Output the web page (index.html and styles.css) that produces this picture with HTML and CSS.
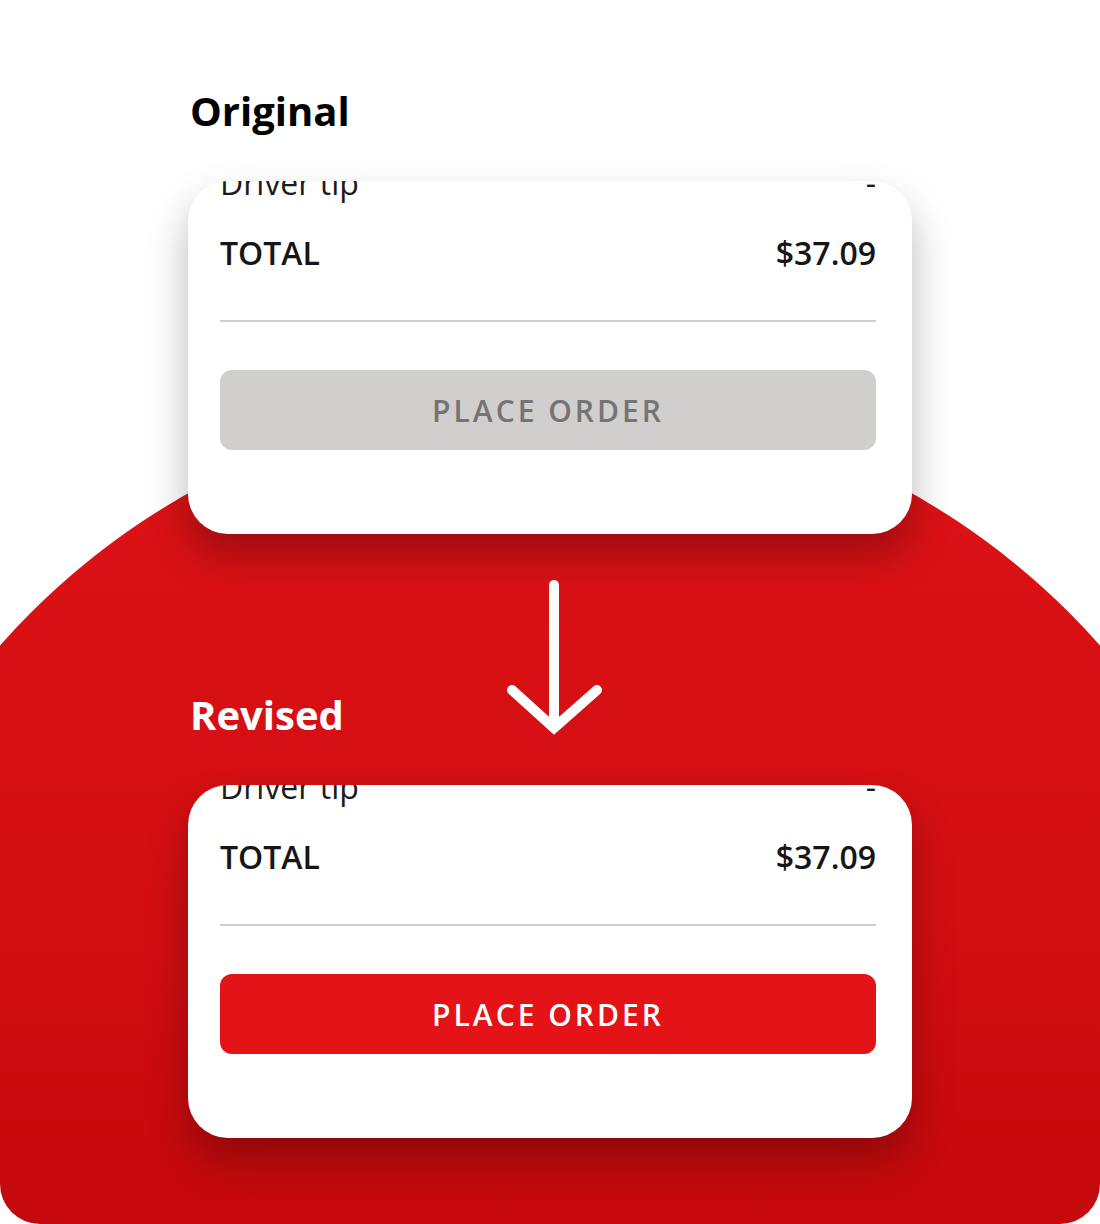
FILE: index.html
```html
<!DOCTYPE html>
<html lang="en">
<head>
  <meta charset="UTF-8" />
  <meta name="viewport" content="width=device-width, initial-scale=1.0"/>
  <title>Place Order - Before / After</title>
  <link rel="stylesheet" href="styles.css">
</head>
<body>
  <div class="page">
    <div class="blob"></div>

    <main class="content">
      <h2 class="label">Original</h2>
      <section class="card">
        <div class="rows">
          <div class="row row-tip"><span>Driver tip</span><span>-</span></div>
          <div class="row row-total"><span>TOTAL</span><span>$37.09</span></div>
        </div>
        <hr class="divider">
        <button class="btn btn-disabled">PLACE ORDER</button>
      </section>

      <div class="arrow">
        <svg width="100" height="160" viewBox="0 0 100 160">
          <line x1="50" y1="7" x2="50" y2="145" stroke="#fff" stroke-width="10" stroke-linecap="round"/>
          <polyline points="8,112 50,150 93,112" fill="none" stroke="#fff" stroke-width="10" stroke-linecap="round" stroke-linejoin="miter"/>
        </svg>
      </div>

      <h2 class="label label-light">Revised</h2>
      <section class="card">
        <div class="rows">
          <div class="row row-tip"><span>Driver tip</span><span>-</span></div>
          <div class="row row-total"><span>TOTAL</span><span>$37.09</span></div>
        </div>
        <hr class="divider">
        <button class="btn btn-active">PLACE ORDER</button>
      </section>
    </main>
  </div>
</body>
</html>
```

FILE: styles.css
```css
* {
  margin: 0;
  padding: 0;
  box-sizing: border-box;
  font-family: 'Open Sans', 'Noto Sans', sans-serif;
}

body {
  background: #fff;
}

.page {
  position: relative;
  width: 1100px;
  height: 1224px;
  border-radius: 40px;
  overflow: hidden;
  background: #fff;
}

/* big red circle behind everything */
.blob {
  position: absolute;
  left: -185px;
  top: 398px;
  width: 1470px;
  height: 1470px;
  border-radius: 50%;
  background: linear-gradient(180deg, #dd1216 0%, #d20e12 35%, #c5090c 55%);
}

.content {
  position: relative;
  width: 724px;
  margin: 0 auto;
  padding-top: 84px;
}

.label {
  font-size: 40px;
  font-weight: 700;
  line-height: 54px;
  color: #000;
  margin-bottom: 43px;
  padding-left: 2px;
}

.label-light {
  color: #fff;
}

.card {
  background: #fff;
  border-radius: 40px;
  overflow: hidden;
  padding: 0 36px 84px 32px;
  box-shadow: 0 22px 40px rgba(0, 0, 0, 0.28);
}

.rows {
  margin-top: -18px;
  display: flex;
  flex-direction: column;
  gap: 30px;
}

.row {
  display: flex;
  justify-content: space-between;
  font-size: 32px;
  line-height: 40px;
  color: #1b1b1b;
}

.row-tip {
  font-weight: 400;
}

.row-total {
  font-weight: 600;
  color: #161616;
}

.divider {
  border: none;
  height: 2px;
  background: #cfcfcf;
  margin-top: 47px;
}

.btn {
  display: block;
  width: 100%;
  height: 80px;
  margin-top: 48px;
  border: none;
  border-radius: 12px;
  font-size: 30px;
  font-weight: 600;
  letter-spacing: 3px;
  cursor: pointer;
}

.btn-disabled {
  background: #d0cfcd;
  color: #747474;
}

.btn-active {
  background: #e31318;
  color: #fff;
}

.arrow {
  height: 154px;
}

.arrow svg {
  display: block;
  margin: 44px 0 0 316px;
}

.arrow + .label {
  margin-top: -44px;
}
```
